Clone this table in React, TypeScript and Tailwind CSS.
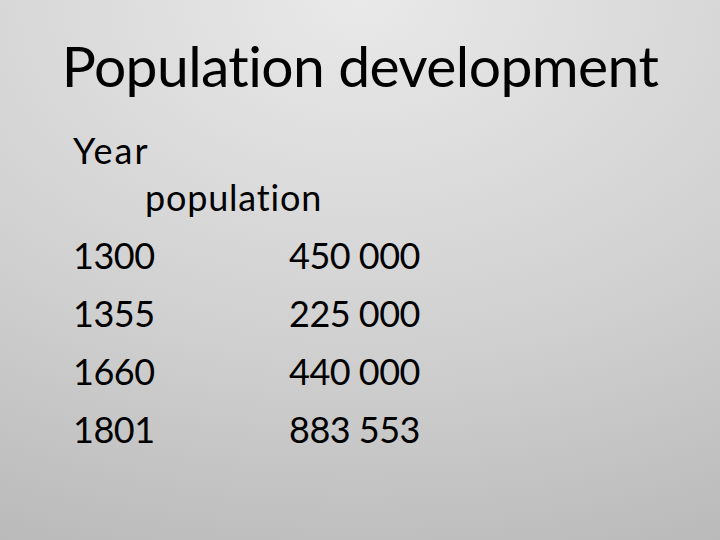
const rows = [
  { year: "1300", pop: "450 000" },
  { year: "1355", pop: "225 000" },
  { year: "1660", pop: "440 000" },
  { year: "1801", pop: "883 553" },
];

export default function App() {
  return (
    <div
      className="w-[720px] h-[540px] overflow-hidden text-black bg-[radial-gradient(ellipse_140%_130%_at_50%_0%,#e9e9e9_0%,#d0d0d0_50%,#b0b0b0_100%)]"
      style={{ fontFamily: "Lato, 'Open Sans', sans-serif" }}
    >
      {/* Title */}
      <div className="h-[127px] pt-[3px] flex items-center justify-center">
        <h1 className="text-[57px] leading-none tracking-[-0.6px]">Population development</h1>
      </div>

      {/* Body */}
      <div className="pl-[73px] text-[36px] leading-[47px] tracking-[-0.5px]">
        <p className="tracking-[2px]">Year</p>
        <p className="pl-[72px] tracking-[0.8px]">population</p>
        {rows.map((r) => (
          <div key={r.year} className="grid grid-cols-[216px_auto] mt-[11px]">
            <span>{r.year}</span>
            <span>{r.pop}</span>
          </div>
        ))}
      </div>
    </div>
  );
}
